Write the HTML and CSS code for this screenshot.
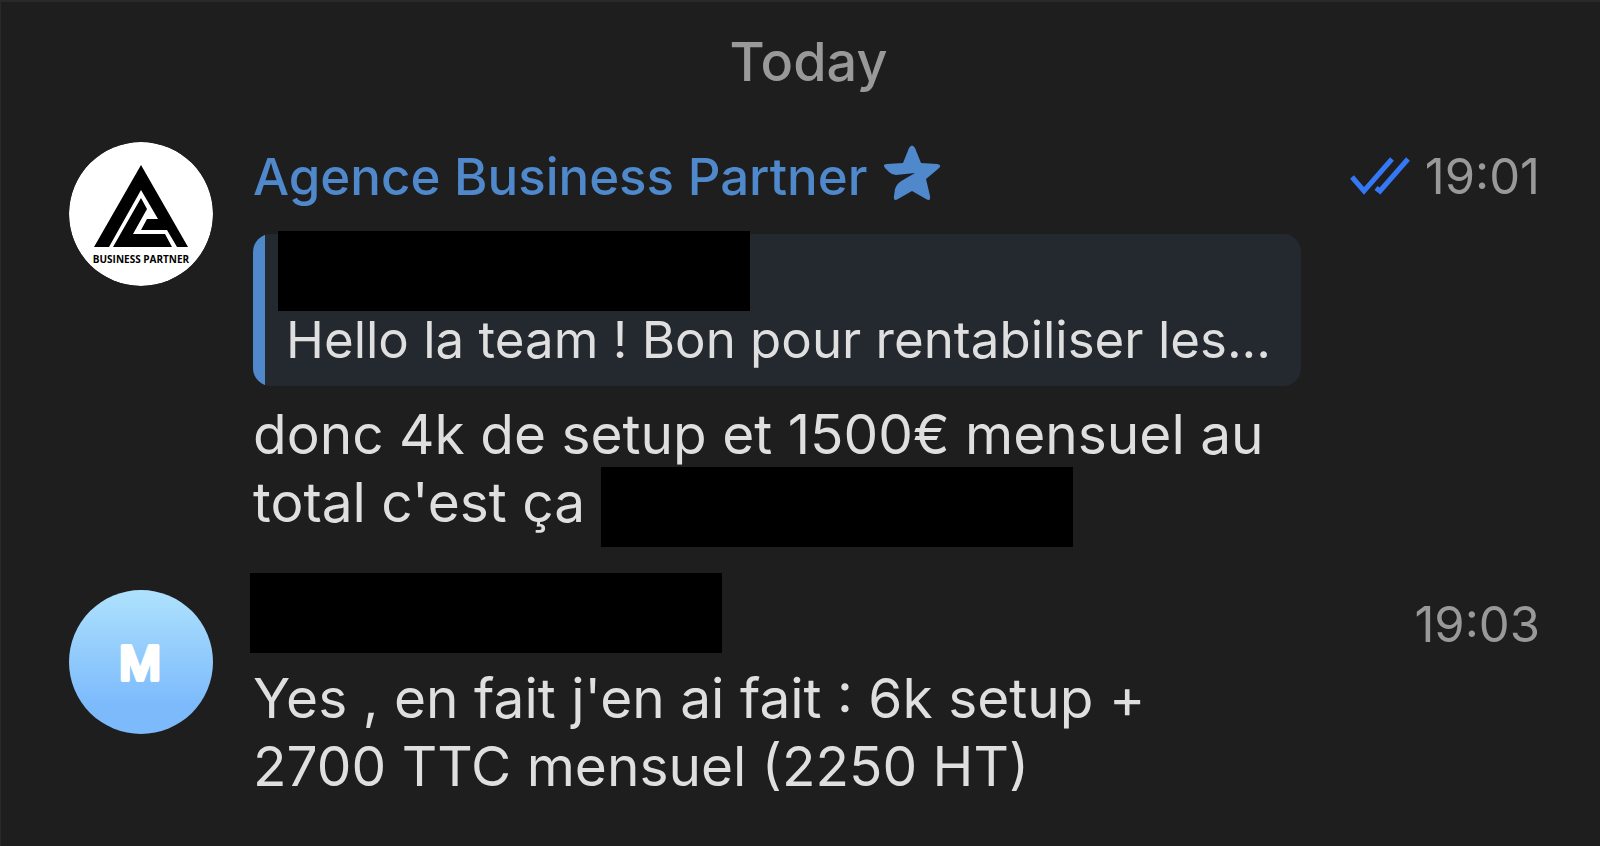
FILE: index.html
```html
<!DOCTYPE html>
<html lang="fr">
<head>
	<meta charset="utf-8"/>
	<meta name="viewport" content="width=device-width, initial-scale=1">
	<title>Agence Business Partner</title>
	<link rel="stylesheet" href="styles.css">
</head>
<body>
	<main class="chat">
		<h1 class="date">Today</h1>
		<article class="message">
			<svg class="avatar" viewBox="0 0 144 144" role="img" aria-label="Agence Business Partner">
				<circle cx="72" cy="72" r="72" fill="#fff"/>
				<path d="M72 23 119 105H108L98 88H72L78 77H89L72 48 40 105H25Z"/>
				<path d="M72 56 78 67 64 92H96L103 105H44Z"/>
				<text x="72" y="121" text-anchor="middle" class="logo-text">BUSINESS PARTNER</text>
			</svg>
			<div class="content">
				<div class="name">
					<span>Agence Business Partner</span>
					<svg class="star" viewBox="0 0 58 62" aria-hidden="true">
						<path d="M26 3Q29-2 32 3L38 18 54 19Q60 20 55 24L43 34 47 51Q48 57 43 54L29 46 15 54Q10 57 11 51L12 44Q14 38 20 35L32 28 13 30Q9 30 6 27L2 23Q-1 19 4 19L20 18Z"/>
					</svg>
				</div>
				<blockquote class="quote">
					<div class="mask"></div>
					<p class="quote-text">Hello la team ! Bon pour rentabiliser les...</p>
				</blockquote>
				<p class="text">donc 4k de setup et 1500€ mensuel au total c'est ça <span class="mask mask-inline"></span></p>
			</div>
			<div class="meta">
				<svg class="checks" viewBox="0 0 60 38" aria-hidden="true">
					<path d="M2 20 14 34 42 2M26 31 30 34 58 2"/>
				</svg>
				<time>19:01</time>
			</div>
		</article>
		<article class="message">
			<svg class="avatar avatar-letter" viewBox="0 0 144 144" role="img" aria-label="M">
				<text x="71" y="90" text-anchor="middle">M</text>
			</svg>
			<div class="content">
				<div class="mask mask-name"></div>
				<p class="text">Yes , en fait j'en ai fait : 6k setup +<br>2700 TTC mensuel (2250 HT)</p>
			</div>
			<div class="meta">
				<time>19:03</time>
			</div>
		</article>
	</main>
</body>
</html>
```
FILE: styles.css
```css
*{
	margin:0;
	padding:0;
	box-sizing: border-box;
}
body{
	background-color: #1e1e1e;
	color:#dfdfdf;
	font-family: Inter, "Liberation Sans", sans-serif;
}
.chat{
	min-height:100vh;
	padding:26px 60px 36px 68px;
	border-top:2px solid #292929;
	border-left:1px solid #292929;
}
.date{
	padding-left:8px;
	color:#999;
	font-size:54px;
	font-weight:500;
	line-height:68px;
	text-align: center;
}
.message{
	display: grid;
	grid-template-columns: 144px minmax(0, 1fr) 199px;
	column-gap:40px;
	margin-top:46px;
}
.message + .message{
	margin-top:54px;
}
.avatar{
	width:144px;
	height:144px;
	border-radius: 50%;
}
.avatar-letter{
	background: linear-gradient(#aee2fd, #7cbafc 80%);
	fill:#fff;
	stroke:#fff;
	stroke-width:4;
	stroke-linejoin: round;
	font-size:46px;
	font-weight:500;
}
.logo-text{
	font-family: "Open Sans", sans-serif;
	font-size:10px;
	font-weight:700;
}
.name{
	display: flex;
	align-items: center;
	gap:16px;
	height:68px;
	color:#4f88cb;
	font-size:51px;
	font-weight:500;
	white-space: nowrap;
}
.star{
	width:58px;
	height:62px;
	fill:#4f88cb;
}
.quote{
	display: flow-root;
	margin:24px 0 14px;
	padding:0 24px 17px 33px;
	border-radius: 18px;
	background: linear-gradient(to right, #4f88cb 12px, #24282f 12px);
}
.mask{
	width:472px;
	height:80px;
	background-color: #000;
}
.quote .mask{
	margin:-3px 0 0 -8px;
}
.quote-text{
	font-size:51px;
	line-height:58px;
	white-space: nowrap;
}
.text{
	font-size:55px;
	line-height:68px;
}
.mask-inline{
	display: inline-block;
	margin:-12px 0;
	vertical-align: -13px;
}
.mask-name{
	margin:-17px 0 11px -3px;
}
.meta{
	display: flex;
	align-items: center;
	justify-content: flex-end;
	gap:15px;
	height:68px;
	color:#999;
	font-size:49px;
}
.checks{
	width:60px;
	height:38px;
	fill:none;
	stroke:#3478f6;
	stroke-width:5;
}
```
